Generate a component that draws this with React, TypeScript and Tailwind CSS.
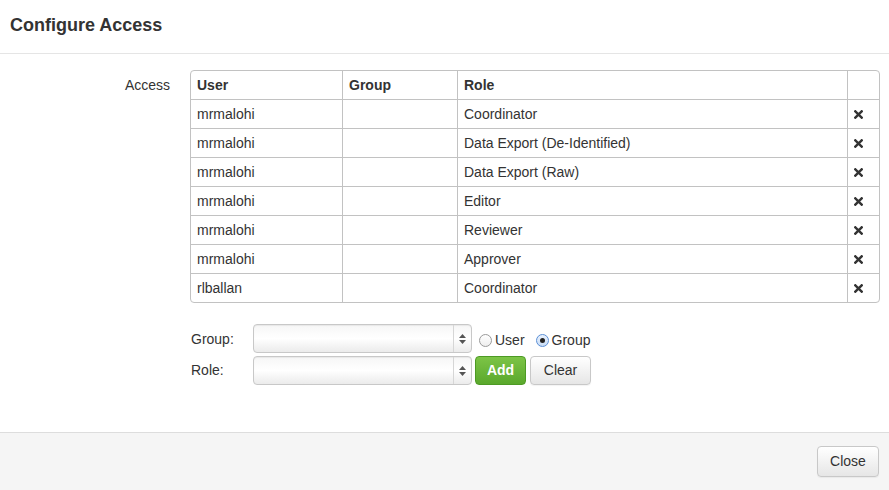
const rows = [
  { user: "mrmalohi", group: "", role: "Coordinator" },
  { user: "mrmalohi", group: "", role: "Data Export (De-Identified)" },
  { user: "mrmalohi", group: "", role: "Data Export (Raw)" },
  { user: "mrmalohi", group: "", role: "Editor" },
  { user: "mrmalohi", group: "", role: "Reviewer" },
  { user: "mrmalohi", group: "", role: "Approver" },
  { user: "rlballan", group: "", role: "Coordinator" },
];

function RemoveIcon() {
  return (
    <svg width="9" height="9" viewBox="0 0 9 9" className="block">
      <path d="M1.3 1.3L7.7 7.7M7.7 1.3L1.3 7.7" stroke="#333" strokeWidth="2.4" strokeLinecap="square" />
    </svg>
  );
}

function Select() {
  return (
    <div className="flex h-[29px] w-[219px] rounded-[4px] border border-[#c8c8c8] bg-gradient-to-b from-[#f6f6f6] via-[#ffffff] to-[#ebebeb] shadow-[inset_0_1px_1px_rgba(0,0,0,0.06)]">
      <div className="flex-1" />
      <div className="flex w-[18px] flex-col items-center justify-center gap-[2px] border-l border-[#d6d6d6]">
        <svg width="7" height="4" viewBox="0 0 7 4">
          <path d="M3.5 0L7 4H0z" fill="#555" />
        </svg>
        <svg width="7" height="4" viewBox="0 0 7 4">
          <path d="M0 0H7L3.5 4z" fill="#555" />
        </svg>
      </div>
    </div>
  );
}

function Radio({ checked, label }: { checked?: boolean; label: string }) {
  return (
    <label className="flex items-center gap-[3px]">
      <span
        className={`flex h-[13px] w-[13px] items-center justify-center rounded-full border ${
          checked ? "border-[#5b8fd6] bg-gradient-to-b from-[#eaf2fd] to-[#c8dcf5]" : "border-[#9a9a9a] bg-gradient-to-b from-white to-[#eeeeee]"
        }`}
      >
        {checked && <span className="h-[5px] w-[5px] rounded-full bg-[#222]" />}
      </span>
      <span>{label}</span>
    </label>
  );
}

export default function App() {
  return (
    <div className="flex h-[490px] w-[889px] flex-col bg-white text-[14px] text-[#333] [font-family:'Liberation_Sans',Arial,sans-serif]">
      {/* Header */}
      <div className="h-[54px] border-b border-[#e5e5e5] px-[10px] pt-[13px]">
        <h3 className="text-[18px] leading-[24px] font-bold text-[#333]">Configure Access</h3>
      </div>

      {/* Body */}
      <div className="flex-1 pt-[16px]">
        <div className="flex">
          <div className="w-[171px] pr-[1px] pt-[5px] text-right leading-[20px]">Access</div>
          <div className="ml-[19px] w-[690px]">
            <table className="w-full border-separate border-spacing-0 rounded-[4px] border border-[#c2c2c2] leading-[20px]">
              <thead>
                <tr>
                  <th className="w-[151px] px-[6px] py-[4px] text-left font-bold">User</th>
                  <th className="w-[115px] border-l border-[#c2c2c2] px-[6px] py-[4px] text-left font-bold">Group</th>
                  <th className="border-l border-[#c2c2c2] px-[6px] py-[4px] text-left font-bold">Role</th>
                  <th className="w-[32px] border-l border-[#c2c2c2]" />
                </tr>
              </thead>
              <tbody>
                {rows.map((r, i) => (
                  <tr key={i}>
                    <td className="border-t border-[#c2c2c2] px-[6px] py-[4px]">{r.user}</td>
                    <td className="border-t border-l border-[#c2c2c2] px-[6px] py-[4px]">{r.group}</td>
                    <td className="border-t border-l border-[#c2c2c2] px-[6px] py-[4px]">{r.role}</td>
                    <td className="border-t border-l border-[#c2c2c2] pl-[6px] align-middle">
                      <RemoveIcon />
                    </td>
                  </tr>
                ))}
              </tbody>
            </table>

            {/* Add form */}
            <div className="mt-[21px] flex flex-col gap-[3px]">
              <div className="flex items-center">
                <div className="w-[63px] pl-[1px] pt-[1px]">Group:</div>
                <Select />
                <div className="ml-[7px] mt-[3px] flex items-center gap-[11px]">
                  <Radio label="User" />
                  <Radio label="Group" checked />
                </div>
              </div>
              <div className="flex items-center">
                <div className="w-[63px] pl-[1px]">Role:</div>
                <Select />
                <button className="ml-[3px] h-[29px] w-[51px] rounded-[4px] border border-[#4d9a24] bg-gradient-to-b from-[#7cc446] to-[#5aa82c] font-bold text-white">
                  Add
                </button>
                <button className="ml-[4px] h-[29px] w-[61px] rounded-[4px] border border-[#c8c8c8] bg-gradient-to-b from-white to-[#e6e6e6] text-[#333] shadow-[0_1px_1px_rgba(0,0,0,0.05)]">
                  Clear
                </button>
              </div>
            </div>
          </div>
        </div>
      </div>

      {/* Footer */}
      <div className="flex h-[58px] items-center justify-end border-t border-[#dddddd] bg-[#f5f5f5] pr-[10px]">
        <button className="h-[31px] w-[62px] rounded-[4px] border border-[#c8c8c8] bg-gradient-to-b from-white to-[#e6e6e6] text-[#333] shadow-[0_1px_1px_rgba(0,0,0,0.05)]">
          Close
        </button>
      </div>
    </div>
  );
}
